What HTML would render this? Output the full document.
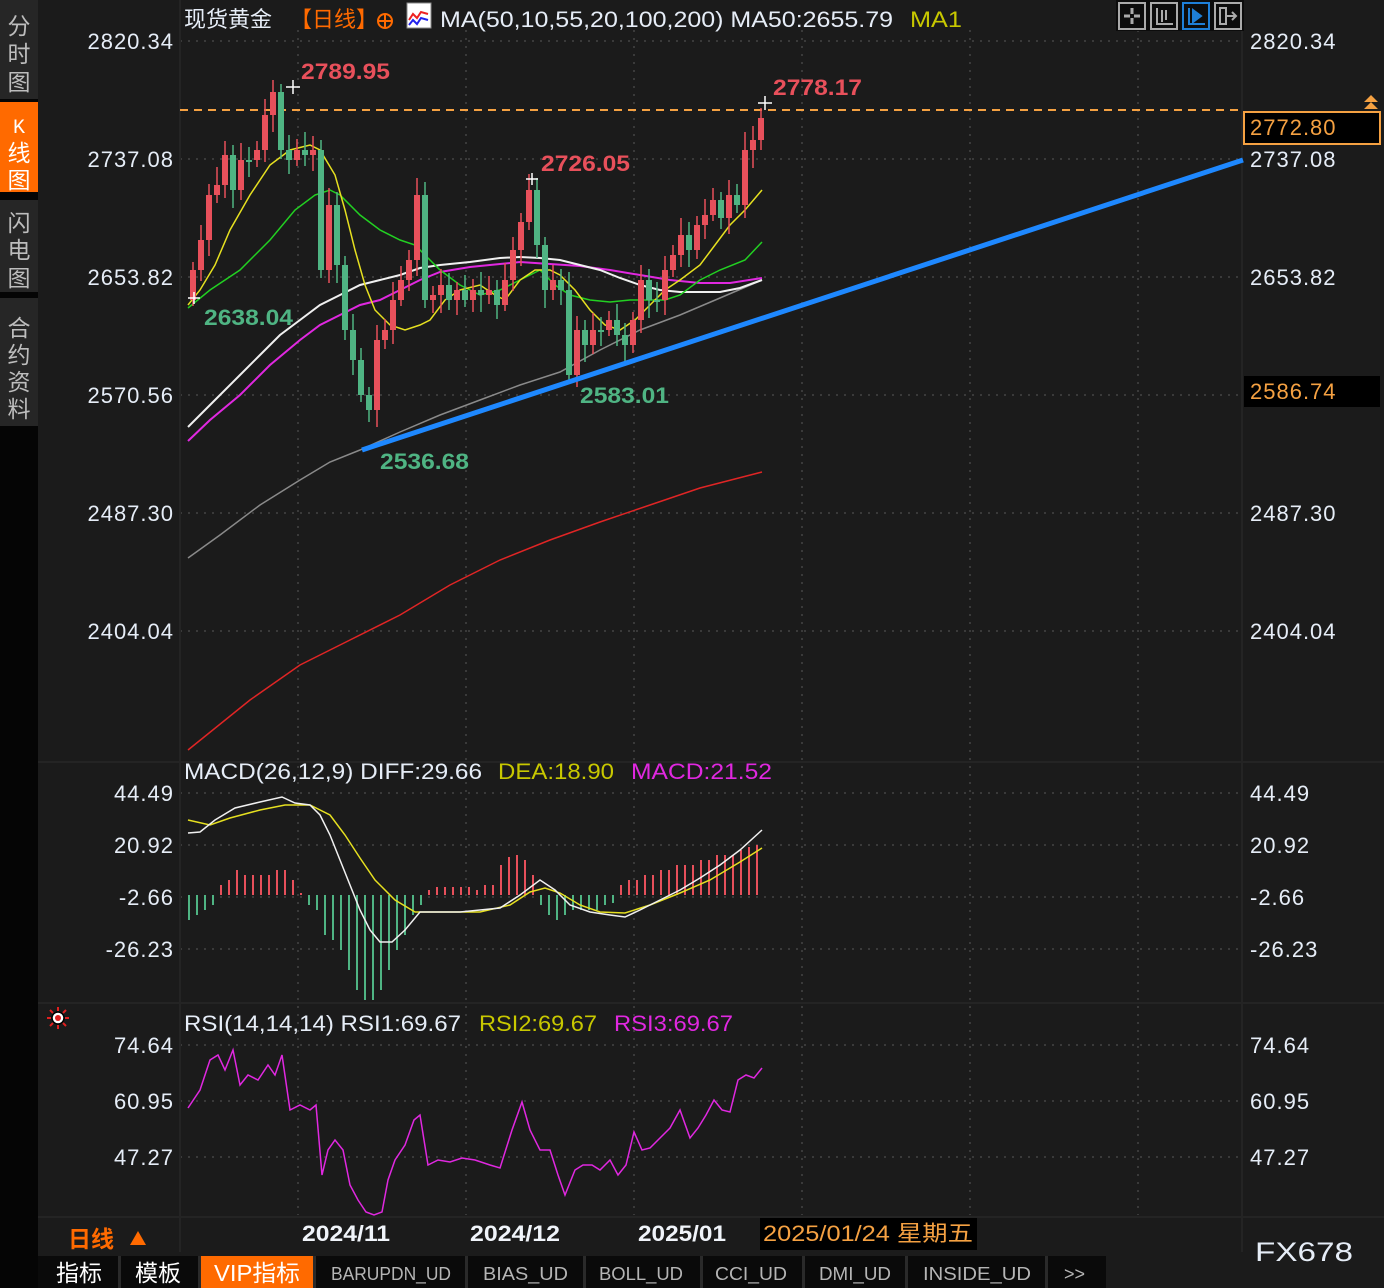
<!DOCTYPE html>
<html><head><meta charset="utf-8">
<style>
html,body{margin:0;padding:0;background:#1b1b1b;width:1384px;height:1288px;overflow:hidden}
svg{display:block}
text{font-family:"Liberation Sans","Noto Sans CJK SC",sans-serif}
.ax{font-size:22px;fill:#e6edf7;letter-spacing:1px}
.mono{font-family:"Liberation Mono","Noto Sans CJK SC",monospace}
</style></head><body>
<svg id="s" width="1384" height="1288" viewBox="0 0 1384 1288" xmlns="http://www.w3.org/2000/svg">
<rect width="1384" height="1288" fill="#1b1b1b"/>
<rect x="0" y="0" width="38" height="1288" fill="#050505"/>
<rect x="0" y="0" width="38" height="99" fill="#262626"/>
<rect x="0" y="102" width="38" height="90" fill="#ff6a00"/>
<rect x="0" y="200" width="38" height="92" fill="#262626"/>
<rect x="0" y="298" width="38" height="128" fill="#262626"/>
<g font-size="23" fill="#bdbdbd" text-anchor="middle">
<text x="19" y="34">分</text><text x="19" y="62">时</text><text x="19" y="90">图</text>
<text x="19" y="133" fill="#fff" font-size="20" class="mono">K</text><text x="19" y="161" fill="#fff">线</text><text x="19" y="188" fill="#fff">图</text>
<text x="19" y="231">闪</text><text x="19" y="258">电</text><text x="19" y="286">图</text>
<text x="19" y="336">合</text><text x="19" y="363">约</text><text x="19" y="390">资</text><text x="19" y="417">料</text>
</g>
<g stroke="#3a3a3a" stroke-width="2" stroke-dasharray="2,6">
<line x1="180" y1="41" x2="1240" y2="41"/><line x1="180" y1="159" x2="1240" y2="159"/><line x1="180" y1="277" x2="1240" y2="277"/><line x1="180" y1="395" x2="1240" y2="395"/><line x1="180" y1="513" x2="1240" y2="513"/><line x1="180" y1="631" x2="1240" y2="631"/>
<line x1="180" y1="793" x2="1240" y2="793"/><line x1="180" y1="845" x2="1240" y2="845"/><line x1="180" y1="897" x2="1240" y2="897"/><line x1="180" y1="949" x2="1240" y2="949"/>
<line x1="180" y1="1045" x2="1240" y2="1045"/><line x1="180" y1="1101" x2="1240" y2="1101"/><line x1="180" y1="1157" x2="1240" y2="1157"/>
<line x1="298" y1="30" x2="298" y2="1215"/><line x1="466" y1="30" x2="466" y2="1215"/><line x1="634" y1="30" x2="634" y2="1215"/><line x1="802" y1="30" x2="802" y2="1215"/><line x1="970" y1="30" x2="970" y2="1215"/><line x1="1138" y1="30" x2="1138" y2="1215"/>
</g>
<g stroke="#242424" stroke-width="2"><line x1="38" y1="762" x2="1384" y2="762"/><line x1="38" y1="1003" x2="1384" y2="1003"/><line x1="38" y1="1217" x2="1384" y2="1217"/><line x1="180" y1="0" x2="180" y2="1252"/><line x1="1242" y1="0" x2="1242" y2="1252"/></g>
<g class="ax" text-anchor="end">
<text x="174" y="49">2820.34</text><text x="174" y="167">2737.08</text><text x="174" y="285">2653.82</text><text x="174" y="403">2570.56</text><text x="174" y="521">2487.30</text><text x="174" y="639">2404.04</text>
<text x="174" y="801">44.49</text><text x="174" y="853">20.92</text><text x="174" y="905">-2.66</text><text x="174" y="957">-26.23</text>
<text x="174" y="1053">74.64</text><text x="174" y="1109">60.95</text><text x="174" y="1165">47.27</text>
</g>
<g class="ax">
<text x="1250" y="49">2820.34</text><text x="1250" y="167">2737.08</text><text x="1250" y="285">2653.82</text><text x="1250" y="521">2487.30</text><text x="1250" y="639">2404.04</text>
<text x="1250" y="801">44.49</text><text x="1250" y="853">20.92</text><text x="1250" y="905">-2.66</text><text x="1250" y="957">-26.23</text>
<text x="1250" y="1053">74.64</text><text x="1250" y="1109">60.95</text><text x="1250" y="1165">47.27</text>
</g>
<text x="184" y="27" font-size="22" fill="#e6edf7">现货黄金</text>
<text x="290" y="27" font-size="22" fill="#ff6a00">【日线】</text>
<circle cx="385" cy="21" r="7" fill="none" stroke="#ff6a00" stroke-width="2"/><line x1="378" y1="21" x2="392" y2="21" stroke="#ff6a00" stroke-width="2"/><line x1="385" y1="14" x2="385" y2="28" stroke="#ff6a00" stroke-width="2"/>
<rect x="407" y="3" width="24" height="25" fill="#fff" stroke="#888"/><polyline points="409,20 413,14 417,18 421,12 428,14" stroke="#e22" fill="none" stroke-width="2"/><polyline points="409,25 413,20 417,24 421,18 428,20" stroke="#22e" fill="none" stroke-width="2"/>
<text x="440" y="27" font-size="22" fill="#e6edf7" textLength="453" lengthAdjust="spacingAndGlyphs">MA(50,10,55,20,100,200) MA50:2655.79</text>
<text x="910" y="27" font-size="22" fill="#c8c800" textLength="52" lengthAdjust="spacingAndGlyphs">MA1</text>
<rect x="1116" y="0" width="128" height="31" fill="#0c0c0c"/>
<g fill="none" stroke-width="2">
<rect x="1119" y="3" width="26" height="26" stroke="#aaa"/><rect x="1151" y="3" width="26" height="26" stroke="#aaa"/><rect x="1183" y="3" width="26" height="26" stroke="#1e7fd8"/><rect x="1215" y="3" width="26" height="26" stroke="#aaa"/>
<path d="M1124 16h6M1134 16h6M1132 8v6M1132 18v6" stroke="#aaa" stroke-width="3"/>
<path d="M1157 8v16h16M1162 10v12M1166 10v10" stroke="#aaa"/>
<path d="M1189 8v16h16" stroke="#1e7fd8"/><path d="M1193 10l8 6-8 6z" fill="#1e7fd8" stroke="#1e7fd8"/>
<path d="M1220 8v16h6v-16zM1226 16h10M1232 12l4 4-4 4" stroke="#aaa"/>
</g>
<line x1="180" y1="110" x2="1242" y2="110" stroke="#f5a142" stroke-width="2" stroke-dasharray="8,6"/>
<rect x="1244" y="112" width="136" height="32" fill="#000" stroke="#f5a142" stroke-width="2"/>
<text x="1250" y="135" font-size="22" fill="#f5a142" letter-spacing="1">2772.80</text>
<path d="M1364 102l7-7 7 7zM1364 109l7-7 7 7z" fill="#f5a142"/>
<rect x="1244" y="376" width="136" height="31" fill="#000"/>
<text x="1250" y="399" font-size="22" fill="#f5a142" letter-spacing="1">2586.74</text>
<g fill="none" stroke-width="1.5">
<polyline stroke="#e02525" points="188,750 250,700 300,665 350,640 400,615 450,585 500,560 550,540 600,522 650,505 700,488 762,472"/>
<polyline stroke="#8a8a8a" points="188,558 220,535 260,505 300,480 330,462 360,450 400,432 440,415 480,400 520,385 560,372 600,350 640,330 680,315 720,298 762,280"/>
<polyline stroke="#e028e0" stroke-width="2" points="188,441 210,420 240,395 270,365 300,340 320,325 340,315 360,305 380,300 400,290 420,280 440,272 470,267 500,264 520,262 550,264 580,266 610,270 640,275 670,280 700,283 730,283 762,278"/>
<polyline stroke="#f0f0f0" stroke-width="2" points="188,427 200,415 220,395 240,375 260,355 280,335 300,320 320,305 340,295 360,285 380,280 400,275 420,268 440,265 470,262 500,258 520,257 540,258 560,260 580,265 600,270 620,278 640,285 660,290 680,292 700,292 720,292 740,288 762,280"/>
<polyline stroke="#22d022" points="188,308 210,290 240,270 270,240 295,210 315,195 330,190 340,195 360,215 380,230 400,240 415,245 425,255 440,270 460,285 480,295 500,290 520,280 540,270 555,285 570,295 590,300 610,302 630,300 650,300 665,300 680,295 700,280 720,270 745,260 762,242"/>
<polyline stroke="#e6e020" points="188,305 200,290 215,265 230,230 250,195 270,165 290,150 310,145 320,150 335,175 345,210 355,250 365,285 375,310 390,325 405,330 420,325 430,320 445,300 460,290 480,285 495,295 505,300 520,280 535,270 550,270 560,275 575,290 590,310 605,325 620,330 635,320 650,305 665,290 680,280 700,265 715,245 730,225 745,210 762,190"/>
</g>
<g id="candles"></g>
<line x1="362" y1="450" x2="1243" y2="160" stroke="#1e88ff" stroke-width="5"/>
<g font-size="22" font-weight="bold">
<text x="301" y="79" fill="#e8505b" textLength="89" lengthAdjust="spacingAndGlyphs">2789.95</text>
<text x="773" y="95" fill="#e8505b" textLength="89" lengthAdjust="spacingAndGlyphs">2778.17</text>
<text x="541" y="171" fill="#e8505b" textLength="89" lengthAdjust="spacingAndGlyphs">2726.05</text>
<text x="204" y="325" fill="#4fb483" textLength="89" lengthAdjust="spacingAndGlyphs">2638.04</text>
<text x="580" y="403" fill="#4fb483" textLength="89" lengthAdjust="spacingAndGlyphs">2583.01</text>
<text x="380" y="469" fill="#4fb483" textLength="89" lengthAdjust="spacingAndGlyphs">2536.68</text>
</g>
<g stroke="#fff" stroke-width="1.5"><path d="M286 87h14M293 80v14M758 103h14M765 96v14M526 179h12M532 173v12M188 298h12M194 292v12"/></g>
<text x="184" y="779" font-size="22" fill="#e6edf7" textLength="298" lengthAdjust="spacingAndGlyphs">MACD(26,12,9) DIFF:29.66</text>
<text x="498" y="779" font-size="22" fill="#c8c800" textLength="116" lengthAdjust="spacingAndGlyphs">DEA:18.90</text>
<text x="631" y="779" font-size="22" fill="#e028e0" textLength="141" lengthAdjust="spacingAndGlyphs">MACD:21.52</text>
<g id="bars"></g>
<polyline fill="none" stroke="#e6e020" stroke-width="1.5" points="188,820 210,825 230,818 260,810 285,805 310,805 330,815 345,835 360,858 375,880 395,900 415,912 440,912 480,912 510,905 530,892 545,888 560,893 580,905 600,912 625,913 650,905 680,893 710,880 740,862 762,848"/>
<polyline fill="none" stroke="#f0f0f0" stroke-width="1.5" points="188,833 200,832 215,820 235,808 260,802 282,797 295,803 310,805 320,815 330,835 340,860 350,885 360,910 370,930 380,942 392,942 405,930 420,912 440,912 460,912 480,910 500,908 520,895 540,880 555,890 570,905 590,912 610,915 625,917 640,910 660,900 680,890 700,878 720,865 740,850 762,830"/>
<g stroke="#e02020" stroke-width="2"><path d="M58 1007v4M58 1025v4M47 1018h4M65 1018h4M50 1010l3 3M66 1010l-3 3M50 1026l3-3M66 1026l-3-3"/></g>
<circle cx="58" cy="1018" r="6" fill="#fff" stroke="#000" stroke-width="1.5"/><circle cx="58" cy="1018" r="3" fill="#e02020"/>
<text x="184" y="1031" font-size="22" fill="#e6edf7" textLength="277" lengthAdjust="spacingAndGlyphs">RSI(14,14,14) RSI1:69.67</text>
<text x="479" y="1031" font-size="22" fill="#c8c800" textLength="118" lengthAdjust="spacingAndGlyphs">RSI2:69.67</text>
<text x="614" y="1031" font-size="22" fill="#e028e0" textLength="119" lengthAdjust="spacingAndGlyphs">RSI3:69.67</text>
<polyline fill="none" stroke="#e028e0" stroke-width="1.5" points="188,1108 200,1090 210,1060 218,1055 225,1070 233,1050 240,1085 248,1075 258,1080 268,1065 275,1075 282,1055 290,1110 300,1105 310,1110 316,1105 322,1175 328,1150 335,1140 343,1150 350,1185 358,1200 366,1212 374,1215 382,1212 388,1180 395,1160 405,1145 414,1120 420,1115 428,1165 438,1160 450,1162 462,1158 475,1160 490,1165 500,1168 512,1130 522,1102 530,1130 540,1150 550,1150 558,1175 565,1195 575,1170 583,1165 592,1165 600,1170 610,1160 618,1175 626,1165 634,1132 642,1150 650,1148 660,1138 670,1128 680,1110 690,1138 698,1128 706,1115 714,1100 722,1110 730,1112 738,1080 746,1075 754,1078 762,1068"/>
<text x="68" y="1247" font-size="23" font-weight="bold" fill="#ff6a00">日线</text><path d="M130 1245l8-14 8 14z" fill="#ff6a00"/>
<g font-size="22" font-weight="bold" fill="#f0f4fa"><text x="302" y="1241" textLength="88" lengthAdjust="spacingAndGlyphs">2024/11</text><text x="470" y="1241" textLength="90" lengthAdjust="spacingAndGlyphs">2024/12</text><text x="638" y="1241" textLength="88" lengthAdjust="spacingAndGlyphs">2025/01</text></g>
<rect x="760" y="1218" width="217" height="32" fill="#000"/>
<text x="763" y="1241" font-size="22" fill="#f5a142" textLength="210" lengthAdjust="spacingAndGlyphs">2025/01/24 星期五</text>
<text x="1255" y="1261" font-size="27" fill="#e6edf7" textLength="98" lengthAdjust="spacingAndGlyphs">FX678</text>
<rect x="38" y="1256" width="1068" height="32" fill="#0a0a0a"/>
<g fill="#2a2a2a"><rect x="118" y="1256" width="3" height="32"/><rect x="198" y="1256" width="3" height="32"/><rect x="313" y="1256" width="3" height="32"/><rect x="465" y="1256" width="3" height="32"/><rect x="583" y="1256" width="3" height="32"/><rect x="700" y="1256" width="3" height="32"/><rect x="802" y="1256" width="3" height="32"/><rect x="905" y="1256" width="3" height="32"/><rect x="1045" y="1256" width="3" height="32"/></g>
<rect x="201" y="1256" width="112" height="32" fill="#ff6a00"/>
<g font-size="23" fill="#fff"><text x="56" y="1281">指标</text><text x="135" y="1281">模板</text><text x="214" y="1281" textLength="86" lengthAdjust="spacingAndGlyphs">VIP指标</text></g>
<g font-size="18" fill="#b5b5b5" class="mono"><text x="331" y="1280" textLength="120" lengthAdjust="spacingAndGlyphs">BARUPDN_UD</text><text x="483" y="1280" textLength="85" lengthAdjust="spacingAndGlyphs">BIAS_UD</text><text x="599" y="1280" textLength="84" lengthAdjust="spacingAndGlyphs">BOLL_UD</text><text x="715" y="1280" textLength="72" lengthAdjust="spacingAndGlyphs">CCI_UD</text><text x="819" y="1280" textLength="72" lengthAdjust="spacingAndGlyphs">DMI_UD</text><text x="923" y="1280" textLength="108" lengthAdjust="spacingAndGlyphs">INSIDE_UD</text><text x="1064" y="1280">&gt;&gt;</text></g>
</svg>
<script>
var C=[285,270,240,195,185,155,190,160,160,150,115,92,150,160,150,155,150,270,205,265,330,360,395,410,340,330,300,280,260,195,300,295,285,300,290,300,290,295,290,305,280,250,222,190,245,290,280,290,375,330,345,330,330,320,335,345,320,280,300,300,270,255,235,250,225,215,200,218,195,205,150,140,118];
var g='';
for(var i=0;i<C.length-1;i++){var x=190+i*8,op=(i==0?300:C[i]),cl=C[i+1];
var up=cl<op,col=up?'#e8505b':'#4fb483',t=Math.min(op,cl),b=Math.max(op,cl);if(b-t<2)b=t+2;
var h=t-8-(i*7%11),l=b+6+(i*5%13);
g+='<line x1="'+(x+3)+'" y1="'+h+'" x2="'+(x+3)+'" y2="'+l+'" stroke="'+col+'" stroke-width="1.5"/><rect x="'+x+'" y="'+t+'" width="6" height="'+(b-t)+'" fill="'+col+'"/>';}
document.getElementById('candles').innerHTML=g;
var M=[-25,-20,-15,-10,10,15,25,20,20,20,20,25,25,15,2,-10,-15,-40,-45,-55,-75,-95,-105,-105,-95,-75,-55,-40,-20,-10,5,8,8,8,8,8,5,10,10,30,38,40,35,20,-10,-20,-25,-20,-15,-15,-15,-15,-10,-8,10,15,15,20,20,25,25,30,30,30,35,35,40,40,40,45,48,50];
var s='';for(var j=0;j<M.length;j++){var x=189+j*8,v=M[j];
s+='<line x1="'+x+'" y1="895" x2="'+x+'" y2="'+(895-v)+'" stroke="'+(v>0?'#e8505b':'#4fb483')+'" stroke-width="2"/>';}
document.getElementById('bars').innerHTML=s;
</script>
</body></html>
